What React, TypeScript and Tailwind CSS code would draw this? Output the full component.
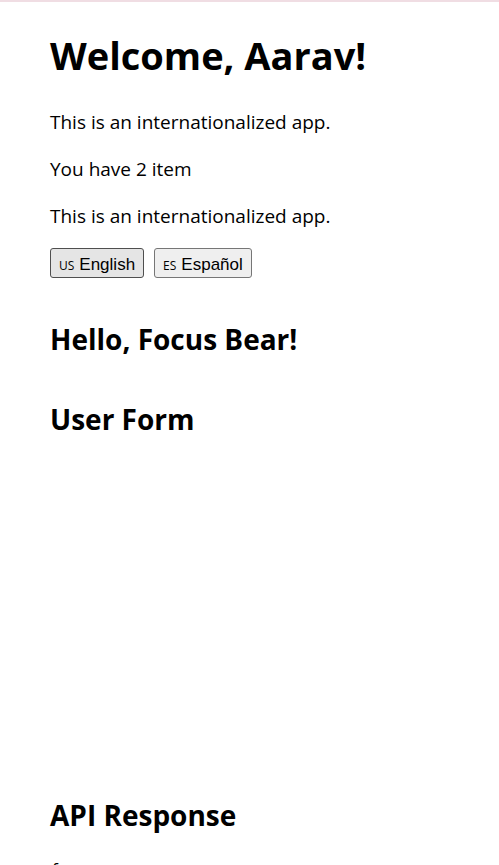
import { useState } from "react";

const languages = [
  { code: "en", region: "US", label: "English" },
  { code: "es", region: "ES", label: "Español" },
];

export default function App() {
  const [language, setLanguage] = useState("en");

  return (
    <div className="h-screen overflow-hidden border-t-2 border-[#f0dde3] bg-white px-[50px] pt-[25px] font-['Open_Sans','Noto_Sans',sans-serif] text-[19px] leading-7 text-black">
      <header>
        <h1 className="text-[38px] leading-[56px] font-bold">Welcome, Aarav!</h1>
        <div className="mt-[25px] flex flex-col gap-[19px]">
          <p>This is an internationalized app.</p>
          <p>You have 2 item</p>
          <p>This is an internationalized app.</p>
        </div>
        <div className="mt-[18px] flex gap-[10px]">
          {languages.map(({ code, region, label }) => (
            <button
              key={code}
              type="button"
              aria-pressed={language === code}
              onClick={() => setLanguage(code)}
              className="flex h-[30px] items-baseline gap-[5px] rounded-[3px] border border-[#767676] bg-[#efefef] px-2 pt-[6px] font-['Liberation_Sans',Arial,sans-serif] text-[17px] leading-5 aria-pressed:border-[#4f4f4f] aria-pressed:bg-[#e5e5e5]"
            >
              <span className="font-['Open_Sans',sans-serif] text-xs leading-5 font-medium">{region}</span>
              <span>{label}</span>
            </button>
          ))}
        </div>
      </header>
      <main>
        <h2 className="mt-[41px] text-[28px] leading-10 font-bold">Hello, Focus Bear!</h2>
        <section className="mt-10 min-h-[356px]">
          <h2 className="text-[28px] leading-10 font-bold">User Form</h2>
        </section>
        <section className="mt-10">
          <h2 className="text-[28px] leading-10 font-bold">API Response</h2>
          <pre className="mt-[26px] font-['Liberation_Mono',monospace] text-base leading-5">{"{"}</pre>
        </section>
      </main>
    </div>
  );
}
